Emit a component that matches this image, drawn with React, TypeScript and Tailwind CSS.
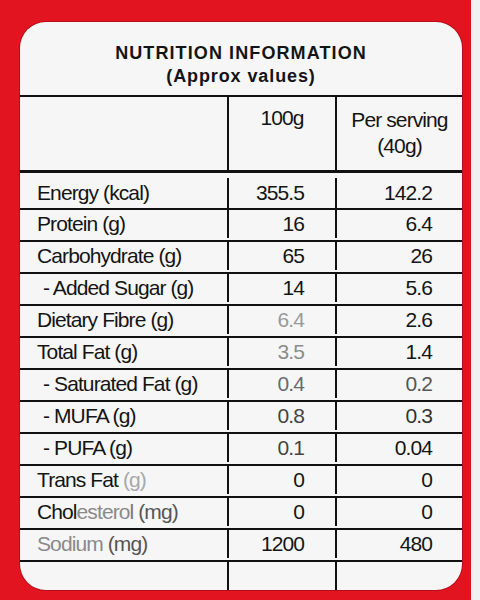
import React from "react";

type Row = {
  label: React.ReactNode;
  per100: string;
  perServing: string;
  c100?: string;
  cServ?: string;
  sub?: boolean;
  tall?: boolean;
};

const rows: Row[] = [
  { label: "Energy (kcal)", per100: "355.5", perServing: "142.2", tall: true },
  { label: "Protein (g)", per100: "16", perServing: "6.4" },
  { label: "Carbohydrate (g)", per100: "65", perServing: "26" },
  { label: "- Added Sugar (g)", per100: "14", perServing: "5.6", sub: true },
  { label: "Dietary Fibre (g)", per100: "6.4", perServing: "2.6", c100: "text-[#9a9a9a]" },
  { label: "Total Fat (g)", per100: "3.5", perServing: "1.4", c100: "text-[#8c8c8c]" },
  {
    label: "- Saturated Fat (g)",
    per100: "0.4",
    perServing: "0.2",
    sub: true,
    c100: "text-[#6a6a6a]",
    cServ: "text-[#555]",
  },
  { label: "- MUFA (g)", per100: "0.8", perServing: "0.3", sub: true, c100: "text-[#444]", cServ: "text-[#333]" },
  { label: "- PUFA (g)", per100: "0.1", perServing: "0.04", sub: true, c100: "text-[#444]" },
  {
    label: (
      <>
        Trans Fat <span className="text-[#a8a8a8]">(g)</span>
      </>
    ),
    per100: "0",
    perServing: "0",
  },
  {
    label: (
      <>
        Chol<span className="text-[#8a8a8a]">estero</span>
        <span className="text-[#777]">l</span> <span className="text-[#555]">(mg)</span>
      </>
    ),
    per100: "0",
    perServing: "0",
  },
  {
    label: (
      <>
        <span className="text-[#8a8a8a]">Sodium</span> <span className="text-[#555]">(mg)</span>
      </>
    ),
    per100: "1200",
    perServing: "480",
  },
];

const App = () => {
  return (
    <div className="w-[480px] h-[600px] flex bg-[#e2141f] font-['Liberation_Sans',Arial,sans-serif] text-[#141414]">
      {/* Red field + label card */}
      <div className="w-[471px] h-full pl-[20px] pt-[22px]">
        <div className="w-[442px] h-[568px] rounded-[26px] overflow-hidden bg-[#f6f6f6] shadow-[0_0_0_1px_#b30e1a] flex flex-col">
          {/* Title */}
          <div className="h-[73px] flex flex-col items-center pt-[20px] font-bold text-[18px] leading-[23px] tracking-[1.1px]">
            <div>NUTRITION INFORMATION</div>
            <div className="tracking-[0.9px]">(Approx values)</div>
          </div>

          <div className="border-t-2 border-[#111] flex-1 flex flex-col text-[21px] tracking-[-0.9px]">
            {/* Header row */}
            <div className="flex h-[76px] border-b-[3px] border-[#111]">
              <div className="w-[207px]" />
              <div className="w-[108px] border-l-2 border-[#111] pt-[8px] text-center leading-[26px]">100g</div>
              <div className="flex-1 border-l-2 border-[#111] pt-[10px] text-center leading-[26px]">
                <div>Per serving</div>
                <div>(40g)</div>
              </div>
            </div>

            {rows.map((r, i) => (
              <div
                key={i}
                className={`flex border-b-2 border-[#111] leading-[26px] ${r.tall ? "h-[37px] pt-[5px]" : "h-[32px] pb-[2px]"}`}
              >
                <div className={`w-[207px] flex items-center ${r.sub ? "pl-[23px]" : "pl-[17px]"}`}>
                  <span>{r.label}</span>
                </div>
                <div className={`w-[108px] border-l-2 border-[#111] flex items-center justify-end pr-[31px] ${r.c100 ?? ""}`}>
                  {r.per100}
                </div>
                <div className={`flex-1 border-l-2 border-[#111] flex items-center justify-end pr-[30px] ${r.cServ ?? ""}`}>
                  {r.perServing}
                </div>
              </div>
            ))}

            {/* Empty last row */}
            <div className="flex flex-1">
              <div className="w-[207px]" />
              <div className="w-[108px] border-l-2 border-[#111]" />
              <div className="flex-1 border-l-2 border-[#111]" />
            </div>
          </div>
        </div>
      </div>
      {/* Light strip on the right edge */}
      <div className="flex-1 h-full bg-[#f1f1f1]" />
    </div>
  );
};

export default App;
